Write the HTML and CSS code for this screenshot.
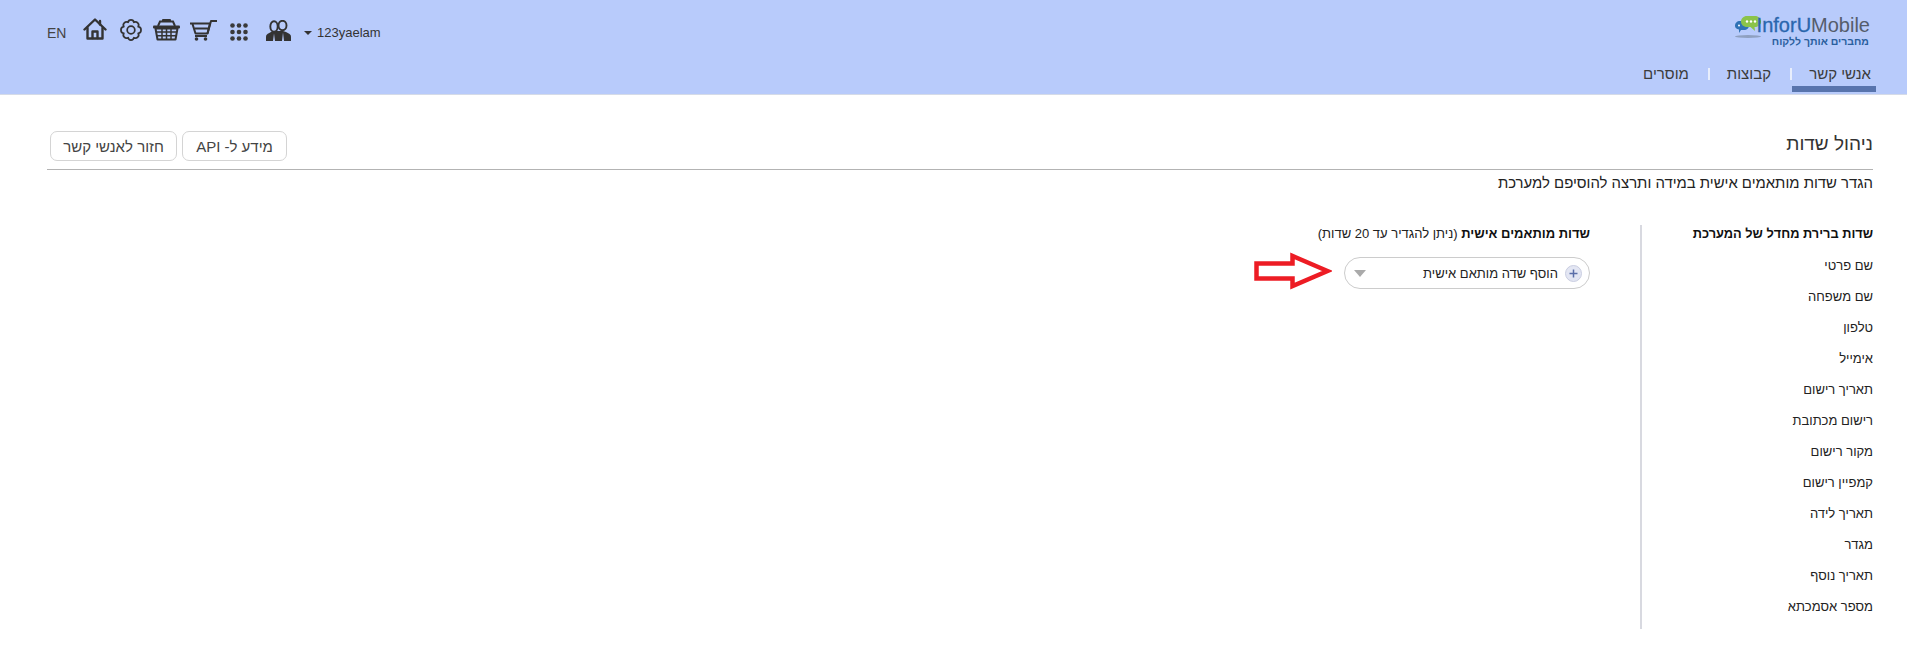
FILE: index.html
```html
<!DOCTYPE html>
<html lang="he" dir="rtl">
<head>
<meta charset="utf-8">
<title>ניהול שדות</title>
<link rel="stylesheet" href="styles.css">
</head>
<body>
<header class="topbar">
  <div class="brand-col">
    <div class="logo">
      <div class="logo-main" dir="ltr">
        <svg class="logo-bubbles" width="28" height="24" viewBox="0 0 28 24">
          <ellipse cx="14" cy="21.500" rx="13" ry="1.500" fill="#8fa0c0"/>
          <path d="M1 11c0-3 2-5 5-5h4c3 0 5 2 5 4.500s-2 4.500-5 4.500H7l-2 3v-3.500C2.500 14 1 13 1 11z" fill="#2f72b5"/>
          <path d="M7 6.500C7 3.500 9.500 1 13 1h8c3.500 0 6 2.500 6 5.500S24.500 12 21 12h-.5l.5 4-4.500-4H13c-3.500 0-6-2.500-6-5.500z" fill="#8bc34a"/>
          <circle cx="13" cy="6.500" r="1.200" fill="#fff"/><circle cx="17" cy="6.500" r="1.200" fill="#fff"/><circle cx="21" cy="6.500" r="1.200" fill="#fff"/>
          <circle cx="5" cy="10.500" r="1" fill="#fff"/>
        </svg>
        <span class="logo-a">InforU</span><span class="logo-b">Mobile</span>
      </div>
      <div class="logo-sub">מחברים אותך ללקוח</div>
    </div>
    <nav class="tabs">
      <a class="tab tab-active">אנשי קשר</a>
      <span class="tab-sep"></span>
      <a class="tab">קבוצות</a>
      <span class="tab-sep"></span>
      <a class="tab">מוסרים</a>
    </nav>
  </div>
  <div class="tools" dir="ltr">
    <span class="lang">EN</span>
    <svg class="ico ico-home" width="24" height="24" viewBox="0 0 24 24" fill="none" stroke="#333" stroke-width="2.400" stroke-linejoin="round" stroke-linecap="round">
      <path d="M1.500 12.500 12 2.500l10.500 10"/><path d="M4.500 11v10.500h15V11"/><path d="M9.500 21v-6.500h5V21"/><path d="M17 4v3.500"/>
    </svg>
    <svg class="ico ico-gear" width="22" height="22" viewBox="0 0 23 23" fill="none" stroke="#333" stroke-width="1.800" stroke-linejoin="round">
      <path d="M11.500 1c1.800 0 2.800 1 3 2.500 1.300-.8 2.800-.7 4 .5s1.300 2.700.5 4c1.500.2 3 1.700 3 3.500s-1.500 3.300-3 3.500c.8 1.300.7 2.800-.5 4s-2.700 1.300-4 .5c-.2 1.500-1.200 2.500-3 2.500s-2.800-1-3-2.500c-1.300.8-2.800.7-4-.5s-1.300-2.700-.5-4C2.500 14.800 1 13.300 1 11.500S2.500 8.200 4 8c-.8-1.300-.7-2.800.5-4s2.700-1.300 4-.5C8.700 2 9.700 1 11.500 1z"/>
      <circle cx="11.500" cy="11.500" r="4"/>
    </svg>
    <svg class="ico ico-basket" width="27" height="22" viewBox="0 0 27 22" fill="none" stroke="#333">
      <path d="M5 7 7 2.500h13L22 7" stroke-width="2"/>
      <rect x="9" y="0" width="9" height="3" rx="1" fill="#333" stroke="none"/>
      <rect x="0" y="6.500" width="27" height="3" rx="1" fill="#333" stroke="none"/>
      <path d="M2.500 9.500 4.500 20.500h18l2-11z" stroke-width="2" stroke-linejoin="round"/>
      <path d="M3 13h21M3.500 16.800h20M9 9.500v11M13.500 9.500v11M18 9.500v11" stroke-width="1.500"/>
    </svg>
    <svg class="ico ico-cart" width="27" height="21" viewBox="0 0 27 21" fill="none" stroke="#333" stroke-width="2" stroke-linejoin="round">
      <path d="M0 3.500h20l-2.500 10H5.500L2.500 4"/>
      <path d="M4.500 8.500h14"/>
      <path d="M17.500 13.500 21 1h6"/>
      <path d="M5 16h12"/>
      <circle cx="6.500" cy="19" r="1.800" fill="#333" stroke="none"/>
      <circle cx="15.500" cy="19" r="1.800" fill="#333" stroke="none"/>
    </svg>
    <svg class="ico ico-grid" width="18" height="18" viewBox="0 0 18 18" fill="#3a3a3a">
      <circle cx="2.500" cy="2.500" r="2.300"/><circle cx="9" cy="2.500" r="2.300"/><circle cx="15.500" cy="2.500" r="2.300"/>
      <circle cx="2.500" cy="9" r="2.300"/><circle cx="9" cy="9" r="2.300"/><circle cx="15.500" cy="9" r="2.300"/>
      <circle cx="2.500" cy="15.500" r="2.300"/><circle cx="9" cy="15.500" r="2.300"/><circle cx="15.500" cy="15.500" r="2.300"/>
    </svg>
    <svg class="ico ico-people" width="25" height="21" viewBox="0 0 25 21">
      <path d="M0 21v-4.500c0-1.800 1.500-2.800 5-4.500l3-1 9 0 3 1c3.500 1.700 5 2.700 5 4.500V21z" fill="#333"/>
      <g fill="#b8cbfb" stroke="#333" stroke-width="1.900">
        <ellipse cx="8" cy="6.500" rx="3.700" ry="5.200"/>
        <ellipse cx="16.500" cy="5.500" rx="4" ry="4.700"/>
      </g>
      <path d="M8 13.500 7 21h2zM17 12.500 16 21h2z" fill="#b8cbfb"/>
    </svg>
    <span class="caret"></span>
    <span class="user">123yaelam</span>
  </div>
</header>

<main class="page">
  <div class="title-row">
    <h1 class="title">ניהול שדות</h1>
    <div class="actions">
      <button class="btn btn-api">מידע ל- API</button>
      <button class="btn btn-back">חזור לאנשי קשר</button>
    </div>
  </div>
  <p class="lead">הגדר שדות מותאמים אישית במידה ותרצה להוסיפם למערכת</p>
  <div class="columns">
    <section class="col-system">
      <h2 class="col-head col-head-system">שדות ברירת מחדל של המערכת</h2>
      <ul class="field-list">
        <li>שם פרטי</li>
        <li>שם משפחה</li>
        <li>טלפון</li>
        <li>אימייל</li>
        <li>תאריך רישום</li>
        <li>רישום מכתובת</li>
        <li>מקור רישום</li>
        <li>קמפיין רישום</li>
        <li>תאריך לידה</li>
        <li>מגדר</li>
        <li>תאריך נוסף</li>
        <li>מספר אסמכתא</li>
      </ul>
    </section>
    <section class="col-custom">
      <h2 class="col-head"><b>שדות מותאמים אישית</b> <span class="col-note">(ניתן להגדיר עד 20 שדות)</span></h2>
      <div class="add-row">
        <button class="add-pill">
          <span class="add-left">
            <span class="plus">
              <svg width="17" height="17" viewBox="0 0 17 17"><circle cx="8.500" cy="8.500" r="8" fill="#e3e6f3" stroke="#c9cde0"/><path d="M8.500 4.500v8M4.500 8.500h8" stroke="#5a6ea8" stroke-width="1.500"/></svg>
            </span>
            <span>הוסף שדה מותאם אישית</span>
          </span>
          <span class="tri"></span>
        </button>
        <svg class="arrow" width="78" height="38" viewBox="0 0 78 38">
          <path d="M73.500 19 38.500 4v7.500h-36v15h36V34z" fill="#fff" stroke="#ed1c24" stroke-width="4.500" stroke-linejoin="miter"/>
        </svg>
      </div>
    </section>
  </div>
</main>
</body>
</html>
```

FILE: styles.css
```css
* { box-sizing: border-box; }
html, body { margin: 0; padding: 0; }
body {
  background: #fff;
  color: #222;
  font-family: "Liberation Sans", Arial, sans-serif;
  font-size: 13px;
  overflow: hidden;
}

.topbar {
  height: 95px;
  background: #b8cbfb;
  border-bottom: 1px solid #d5dbe8;
  display: flex;
  justify-content: space-between;
  align-items: flex-start;
  padding: 0 34px 0 47px;
}

.brand-col {
  display: flex;
  flex-direction: column;
  align-items: flex-start;
}

.logo {
  padding: 14px 3px 0 0;
  height: 60px;
  display: flex;
  flex-direction: column;
  align-items: flex-start;
}
.logo-main {
  display: flex;
  align-items: flex-end;
  height: 22px;
  font-size: 20px;
  line-height: 22px;
}
.logo-bubbles { margin: 1px -5px 0 0; align-self: flex-start; flex: none; }
.logo-a { color: #2a66ad; -webkit-text-stroke: .3px #2a66ad; }
.logo-b { color: #555d6b; }
.logo-sub {
  font-size: 10.500px;
  font-weight: 700;
  color: #2a5f9e;
  line-height: 11px;
  margin-right: 1px;
}

.tabs {
  display: flex;
  align-items: flex-start;
  height: 33px;
  padding-top: 5px;
  margin-right: -3px;
}
.tab {
  font-size: 15px;
  line-height: 17px;
  color: #3b3b3b;
  height: 27px;
}
.tab-active {
  width: 84px;
  padding-right: 5px;
  border-bottom: 6px solid #5874ad;
}
.tab-sep {
  width: 2px;
  height: 12px;
  margin: 3px 0 0;
  background: #e8eefc;
}
.tab-sep + .tab { margin: 0 19px 0 17px; }

.tools {
  display: flex;
  align-items: center;
  height: 24px;
  margin-top: 19px;
}
.ico { display: block; flex: none; }
.lang { font-size: 14px; color: #444; width: 20px; margin-top: 3px; flex: none; }
.ico-home { margin-left: 16px; margin-top: -4px; }
.ico-gear { margin-left: 13px; margin-top: -3px; }
.ico-basket { margin-left: 11px; margin-top: -3px; }
.ico-cart { margin-left: 10px; margin-top: -1px; }
.ico-grid { margin-left: 13px; margin-top: 1px; }
.ico-people { margin-left: 18px; margin-top: -1px; }
.caret {
  width: 0;
  height: 0;
  margin: 4px 0 0 13px;
  border-left: 4px solid transparent;
  border-right: 4px solid transparent;
  border-top: 4px solid #333;
}
.user { font-size: 13px; color: #333; margin: 3px 0 0 5px; }

.page { padding: 0 34px 0 47px; }

.title-row {
  display: flex;
  justify-content: space-between;
  align-items: flex-start;
  height: 75px;
  border-bottom: 1px solid #b3b3b3;
}
.title {
  margin: 37px 0 0;
  font-size: 19px;
  font-weight: 400;
  line-height: 24px;
  color: #333;
}
.actions {
  display: flex;
  gap: 5px;
  margin: 36px 0 0 3px;
}
.btn {
  font-family: inherit;
  font-size: 15px;
  color: #444;
  background: #fff;
  border: 1px solid #d4d4d4;
  border-radius: 7px;
  height: 30px;
  padding: 0;
}
.btn-api { width: 105px; }
.btn-back { width: 127px; }

.lead {
  margin: 5px 0 0;
  font-size: 14.900px;
  line-height: 17px;
  color: #222;
}

.columns {
  display: flex;
  align-items: flex-start;
  margin-top: 33px;
}
.col-system {
  width: 233px;
  height: 404px;
  border-left: 2px solid #d8d9e0;
}
.col-custom { padding-right: 50px; }
.col-head {
  margin: 0;
  font-size: 13px;
  font-weight: 700;
  line-height: 18px;
  color: #111;
}
.col-head-system { font-size: 12.800px; }
.col-note { font-weight: 400; color: #222; }

.field-list {
  list-style: none;
  margin: 7px 0 0;
  padding: 0;
}
.field-list li {
  font-size: 13px;
  line-height: 31px;
  height: 31px;
  color: #222;
}

.add-row {
  display: flex;
  align-items: flex-start;
  gap: 12px;
  margin-top: 9px;
}
.add-pill {
  width: 246px;
  height: 32px;
  margin-top: 5px;
  font-family: inherit;
  font-size: 13px;
  color: #222;
  background: #fff;
  border: 1px solid #ccc;
  border-radius: 16px;
  padding: 0 7px 0 9px;
  display: flex;
  justify-content: space-between;
  align-items: center;
}
.add-left { display: flex; align-items: center; gap: 7px; }
.plus { display: block; height: 17px; }
.tri {
  width: 0;
  height: 0;
  border-left: 6px solid transparent;
  border-right: 6px solid transparent;
  border-top: 7px solid #aaa;
}
.arrow { display: block; flex: none; }
```
